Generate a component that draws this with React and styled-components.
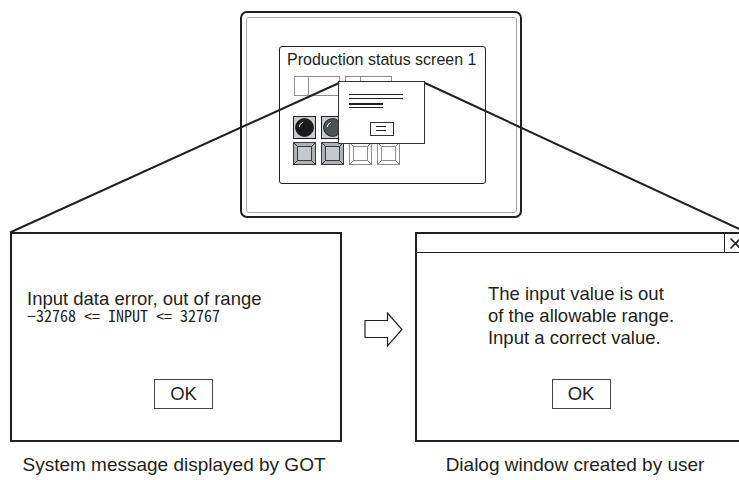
import styled, { createGlobalStyle } from "styled-components";

const ink = "#231f20";

const Global = createGlobalStyle`
  html, body {
    margin: 0;
    padding: 0;
    background: #fff;
  }
  body {
    font-family: "Liberation Sans", Arial, sans-serif;
    color: ${ink};
  }
`;

function Bevel({ filled }) {
  const edge = filled ? "#3a3a3a" : "#8c8c8c";
  const face = filled ? "#c5c8cc" : "#fff";
  const side = filled ? "#aeb1b5" : "#fff";
  return (
    <svg width="23" height="23" viewBox="0 0 23 23">
      <rect x="0.5" y="0.5" width="22" height="22" fill={side} stroke={edge} />
      <rect x="4.5" y="4.5" width="14" height="14" fill={face} stroke={edge} />
      <path d="M0.5 0.5 L4.5 4.5 M22.5 0.5 L18.5 4.5 M0.5 22.5 L4.5 18.5 M22.5 22.5 L18.5 18.5" stroke={edge} />
    </svg>
  );
}

function Lamp({ color }) {
  return (
    <svg width="23" height="23" viewBox="0 0 23 23">
      <rect x="0.5" y="0.5" width="22" height="22" fill="#c8cbcf" stroke={ink} />
      <circle cx="11.5" cy="11.5" r="9" fill={color} stroke="#111" strokeWidth="0.8" />
      <path d="M6.2 11 A5.6 5.6 0 0 1 10 6.3" fill="none" stroke="#fff" strokeWidth="1" />
    </svg>
  );
}

function CloseIcon() {
  return (
    <svg width="13" height="13" viewBox="0 0 13 13">
      <path d="M1.5 1.5 L11.5 11.5 M11.5 1.5 L1.5 11.5" stroke={ink} strokeWidth="1.6" />
    </svg>
  );
}

function Arrow() {
  return (
    <svg width="40" height="36" viewBox="0 0 40 36">
      <path
        d="M1 8.5 H23.5 V1 L38 17.5 L23.5 34 V25.5 H1 Z"
        fill="#fff"
        stroke={ink}
        strokeWidth="1.2"
        strokeLinejoin="miter"
      />
    </svg>
  );
}

export default function App() {
  return (
    <Page>
      <Global />
      <DeviceRow>
        <Device>
          <Bezel>
            <Screen>
              <ScreenTitle>Production status screen 1</ScreenTitle>
              <FieldRow>
                <Field>
                  <FieldCell $w={13} />
                  <FieldCell $w={30} />
                </Field>
                <Field>
                  <FieldCell $w={14} />
                  <FieldCell $w={30} />
                </Field>
              </FieldRow>
              <PartRow $top={20}>
                <Lamp color="#1c1c1c" />
                <Lamp color="#4a5353" />
              </PartRow>
              <PartRow $top={3}>
                <Bevel filled />
                <Bevel filled />
                <Bevel />
                <Bevel />
              </PartRow>
              <Popup>
                <PopupLine $w={54} />
                <PopupLine $w={54} $gap={2.5} />
                <PopupLine $w={34} $gap={4} />
                <PopupLine $w={34} $gap={2} />
                <PopupButton>
                  <PopupLine $w={10} />
                  <PopupLine $w={10} $gap={2.5} />
                </PopupButton>
              </Popup>
            </Screen>
          </Bezel>
        </Device>
      </DeviceRow>

      <DialogRow>
        <Dialog>
          <SystemBody>
            <Message>Input data error, out of range</Message>
            <Range>−32768 &lt;= INPUT &lt;= 32767</Range>
            <OkButton>OK</OkButton>
          </SystemBody>
        </Dialog>
        <ArrowSlot>
          <Arrow />
        </ArrowSlot>
        <Dialog>
          <TitleBar>
            <CloseButton>
              <CloseIcon />
            </CloseButton>
          </TitleBar>
          <UserBody>
            <Message>
              The input value is out
              <br />
              of the allowable range.
              <br />
              Input a correct value.
            </Message>
            <OkButton>OK</OkButton>
          </UserBody>
        </Dialog>
      </DialogRow>

      <CaptionRow>
        <Caption>System message displayed by GOT</Caption>
        <Caption>Dialog window created by user</Caption>
      </CaptionRow>

      <Leaders width="739" height="480" viewBox="0 0 739 480">
        <line x1="339" y1="83" x2="10" y2="232.5" />
        <line x1="425" y1="83" x2="747" y2="232.5" />
      </Leaders>
    </Page>
  );
}

const Page = styled.div`
  position: relative;
  width: 739px;
  height: 480px;
  overflow: hidden;
  background: #fff;
`;

const DeviceRow = styled.div`
  padding: 11px 0 0 240px;
`;

const Device = styled.div`
  box-sizing: border-box;
  width: 282px;
  height: 207px;
  border: 2.5px solid ${ink};
  border-radius: 7px;
  padding: 4px 3px 3.5px 3.5px;
`;

const Bezel = styled.div`
  box-sizing: border-box;
  height: 100%;
  border: 1.5px solid #a8a8a8;
  border-radius: 3px;
  padding: 27.5px 30px 28px 32.5px;
`;

const Screen = styled.div`
  position: relative;
  box-sizing: border-box;
  height: 100%;
  border: 1px solid ${ink};
  border-radius: 3px;
  padding: 4px 0 0 13px;
`;

const ScreenTitle = styled.div`
  font-size: 16px;
  line-height: 18px;
  margin-left: -6px;
  white-space: nowrap;
`;

const FieldRow = styled.div`
  display: flex;
  gap: 5px;
  margin: 7px 0 0 1px;
`;

const Field = styled.div`
  display: flex;
  height: 20px;
  box-sizing: border-box;
  border: 1px solid #8f8f8f;
`;

const FieldCell = styled.div`
  width: ${(p) => p.$w}px;
  & + & {
    border-left: 1px solid #8f8f8f;
  }
`;

const PartRow = styled.div`
  display: flex;
  gap: 5px;
  margin-top: ${(p) => p.$top}px;
  svg {
    display: block;
  }
`;

const Popup = styled.div`
  position: absolute;
  left: 57.5px;
  top: 34.5px;
  box-sizing: border-box;
  width: 87px;
  height: 63px;
  background: #fff;
  border: 1.5px solid #333;
  padding: 11.5px 0 0 10px;
`;

const PopupLine = styled.div`
  width: ${(p) => p.$w}px;
  height: 1.5px;
  background: ${ink};
  margin-top: ${(p) => p.$gap || 0}px;
`;

const PopupButton = styled.div`
  box-sizing: border-box;
  width: 24px;
  height: 14px;
  margin: 13.5px 0 0 21px;
  border: 1.5px solid #333;
  padding: 3px 0 0 5.5px;
`;

const DialogRow = styled.div`
  display: flex;
  margin-top: 14px;
  padding-left: 10px;
`;

const Dialog = styled.div`
  box-sizing: border-box;
  width: 332px;
  height: 210px;
  border: 2px solid ${ink};
  display: flex;
  flex-direction: column;
  flex-shrink: 0;
`;

const ArrowSlot = styled.div`
  width: 73px;
  flex-shrink: 0;
  padding: 80px 0 0 22px;
  box-sizing: border-box;
  svg {
    display: block;
  }
`;

const SystemBody = styled.div`
  flex: 1;
  display: flex;
  flex-direction: column;
  padding: 54px 0 0 15px;
`;

const Message = styled.div`
  font-size: 18.5px;
  line-height: 22px;
  white-space: nowrap;
`;

const Range = styled.div`
  font-family: "Noto Sans Mono CJK JP", "Liberation Mono", monospace;
  font-size: 16px;
  line-height: 17px;
  margin-top: -3px;
  white-space: nowrap;
`;

const OkButton = styled.div`
  box-sizing: border-box;
  width: 59px;
  height: 30px;
  margin: auto auto 31px;
  border: 1px solid #444;
  display: flex;
  align-items: center;
  justify-content: center;
  font-size: 18.5px;
`;

const TitleBar = styled.div`
  box-sizing: border-box;
  height: 19px;
  border-bottom: 1.5px solid ${ink};
  display: flex;
  justify-content: flex-end;
`;

const CloseButton = styled.div`
  width: 20px;
  border-left: 1.5px solid ${ink};
  display: flex;
  align-items: center;
  justify-content: center;
`;

const UserBody = styled.div`
  flex: 1;
  display: flex;
  flex-direction: column;
  align-items: center;
  padding-top: 30px;
`;

const CaptionRow = styled.div`
  display: flex;
  gap: 73px;
  padding-left: 10px;
  margin-top: 12px;
`;

const Caption = styled.div`
  width: 332px;
  text-align: center;
  font-size: 19px;
  line-height: 22px;
  white-space: nowrap;
`;

const Leaders = styled.svg`
  position: absolute;
  left: 0;
  top: 0;
  pointer-events: none;
  line {
    stroke: ${ink};
    stroke-width: 2;
  }
`;
